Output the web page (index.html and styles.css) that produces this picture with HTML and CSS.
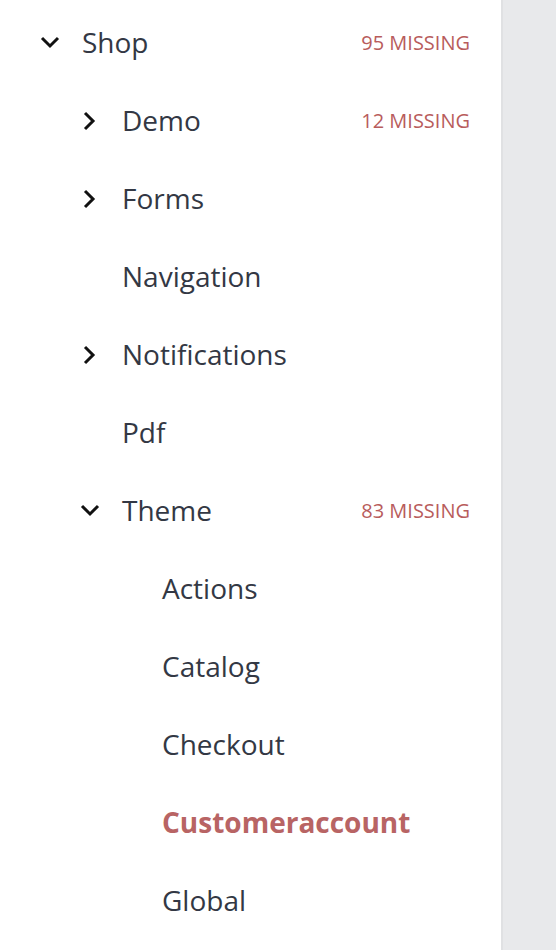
FILE: index.html
```html
<!DOCTYPE html>
<html>
<head>
<meta charset="utf-8">
<link rel="stylesheet" href="styles.css">
</head>
<body>
<div class="layout">
  <nav class="panel">
    <ul class="tree">
      <li class="row lvl0">
        <span class="icon"><svg viewBox="0 0 20 20" width="20" height="20"><path d="M2 5 L10 13 L18 5" /></svg></span>
        <span class="label">Shop</span>
        <span class="missing">95 missing</span>
      </li>
      <li class="row lvl1">
        <span class="icon"><svg viewBox="0 0 20 20" width="20" height="20"><path d="M5 2 L13 10 L5 18" /></svg></span>
        <span class="label">Demo</span>
        <span class="missing">12 missing</span>
      </li>
      <li class="row lvl1">
        <span class="icon"><svg viewBox="0 0 20 20" width="20" height="20"><path d="M5 2 L13 10 L5 18" /></svg></span>
        <span class="label">Forms</span>
      </li>
      <li class="row lvl1">
        <span class="icon"></span>
        <span class="label">Navigation</span>
      </li>
      <li class="row lvl1">
        <span class="icon"><svg viewBox="0 0 20 20" width="20" height="20"><path d="M5 2 L13 10 L5 18" /></svg></span>
        <span class="label">Notifications</span>
      </li>
      <li class="row lvl1">
        <span class="icon"></span>
        <span class="label">Pdf</span>
      </li>
      <li class="row lvl1">
        <span class="icon"><svg viewBox="0 0 20 20" width="20" height="20"><path d="M2 5 L10 13 L18 5" /></svg></span>
        <span class="label">Theme</span>
        <span class="missing">83 missing</span>
      </li>
      <li class="row lvl2">
        <span class="icon"></span>
        <span class="label">Actions</span>
      </li>
      <li class="row lvl2">
        <span class="icon"></span>
        <span class="label">Catalog</span>
      </li>
      <li class="row lvl2">
        <span class="icon"></span>
        <span class="label">Checkout</span>
      </li>
      <li class="row lvl2 active">
        <span class="icon"></span>
        <span class="label">Customeraccount</span>
      </li>
      <li class="row lvl2">
        <span class="icon"></span>
        <span class="label">Global</span>
      </li>
    </ul>
  </nav>
  <div class="side"></div>
</div>
</body>
</html>
```

FILE: styles.css
```css
html, body {
  margin: 0;
  padding: 0;
  height: 100%;
}
body {
  font-family: "Open Sans", "Noto Sans", sans-serif;
  background: #e8e9eb;
  overflow: hidden;
}
.layout {
  display: flex;
  height: 950px;
}
.panel {
  width: 501px;
  background: #ffffff;
  border-right: 2px solid #e0e1e3;
  box-sizing: content-box;
}
.side {
  flex: 1;
  background: #e8e9eb;
}
.tree {
  list-style: none;
  margin: 0;
  padding: 3px 31px 0 0;
}
.row {
  display: flex;
  align-items: center;
  height: 78px;
}
.lvl0 { padding-left: 40px; }
.lvl1 { padding-left: 80px; }
.lvl2 { padding-left: 120px; }
.icon {
  width: 20px;
  height: 20px;
  flex: 0 0 20px;
  margin-right: 22px;
  display: flex;
  margin-top: 2px;
}
.icon svg path {
  fill: none;
  stroke: #111111;
  stroke-width: 3;
  stroke-linecap: butt;
  stroke-linejoin: miter;
}
.label {
  font-size: 28px;
  color: #333844;
  flex: 1;
}
.missing {
  font-size: 20px;
  text-transform: uppercase;
  color: #b85c5c;
}
.active .label {
  font-weight: 700;
  color: #b86464;
}
```
